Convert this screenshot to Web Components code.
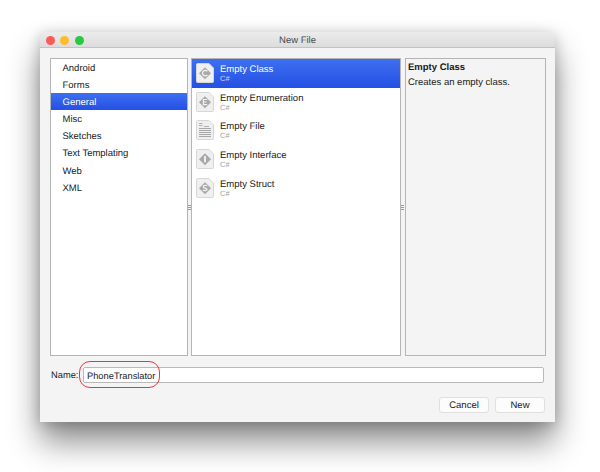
<!DOCTYPE html>
<html>
<head>
<meta charset="utf-8">
<title>New File</title>
<style>
html,body{margin:0;background:#fff;overflow:hidden}
body{width:600px;height:472px;font-family:"Liberation Sans",Arial,sans-serif;text-rendering:geometricPrecision}
</style>
</head>
<body>
<new-file-dialog></new-file-dialog>

<script>
/* small helper, every element below just sets its shadow html */
const shadow = (el, html) => { el.attachShadow({ mode: "open" }).innerHTML = html; };

const LETTERS = {
  class: '<path d="M11.300 8.400a2.700 2.700 0 1 0 0 3.400" fill="none" stroke="#f4f4f4" stroke-width="1.300"/>',
  enum: '<path d="M11.200 7.500H7.400v5.200h3.800M7.400 10h3.200" fill="none" stroke="#f4f4f4" stroke-width="1.200"/>',
  iface: '<path d="M9 7v6.200" fill="none" stroke="#f4f4f4" stroke-width="1.800"/>',
  struct: '<path d="M11 8c-.5-.8-3.700-1-3.800.7-.1 1.700 3.900 1 3.800 2.700-.1 1.600-3.400 1.400-4 .5" fill="none" stroke="#f4f4f4" stroke-width="1.200"/>'
};

class FileIcon extends HTMLElement {
  connectedCallback() {
    if (this._init) return; this._init = true;
    const kind = this.getAttribute("kind");
    let inner;
    if (LETTERS[kind]) {
      inner = `<path d="M9 4.200l6 6-6 6-6-6z" fill="#a8a8a8"/>${LETTERS[kind]}`;
    } else {
      inner = `<path d="M3 3.500h3.500M3 5.500h3.500M8 6.500h5" stroke="#b0b0b0" stroke-width="1"/>
        <path d="M3 8.500h12M3 10.500h12M3 12.500h12M3 14.500h12M3 16.500h12" stroke="#a8a8a8" stroke-width="1.100"/>`;
    }
    shadow(this, `<style>:host{display:block;width:18px;height:20px;flex:none}svg{display:block}</style>
      <svg width="18" height="20" viewBox="0 0 18 20">
        <path d="M.5 1.500a1 1 0 0 1 1-1H13l4.500 4.500v13.500a1 1 0 0 1-1 1h-15a1 1 0 0 1-1-1z" fill="#efefef" stroke="#d6d6d6"/>
        ${inner}
      </svg>`);
  }
}
customElements.define("file-icon", FileIcon);

class CategoryItem extends HTMLElement {
  connectedCallback() {
    if (this._init) return; this._init = true;
    shadow(this, `<style>
      :host{display:block;height:17.100px;line-height:19px;padding-left:11.500px;font-size:9.500px;color:#1a1a1a}
      :host([selected]){color:#fff;background:linear-gradient(180deg,#3e6ff0,#2450e4)}
    </style><slot></slot>`);
  }
}
customElements.define("category-item", CategoryItem);

class TemplateItem extends HTMLElement {
  connectedCallback() {
    if (this._init) return; this._init = true;
    const kind = this.getAttribute("kind");
    const sub = this.getAttribute("sub") || "C#";
    shadow(this, `<style>
      :host{display:flex;align-items:center;gap:6px;height:28.600px;padding-left:4px;color:#1a1a1a;font-size:9.500px}
      :host([selected]){color:#fff;background:linear-gradient(180deg,#3e6ff0,#2450e4)}
      .t{display:flex;flex-direction:column;line-height:11px;margin-top:1px}
      .s{font-size:7.500px;line-height:8px;color:#a3a3a3}
      :host([selected]) .s{color:#c7d4f8}
    </style>
    <file-icon kind="${kind}"></file-icon>
    <div class="t"><span><slot></slot></span><span class="s">${sub}</span></div>`);
  }
}
customElements.define("template-item", TemplateItem);

class PushButton extends HTMLElement {
  connectedCallback() {
    if (this._init) return; this._init = true;
    shadow(this, `<style>
      :host{display:block;box-sizing:border-box;width:50px;height:16px;line-height:16px;text-align:center;font-size:9.500px;color:#1a1a1a;
        background:#fcfcfc;border:1px solid #e0e0e0;border-radius:3px}
    </style><slot></slot>`);
  }
}
customElements.define("push-button", PushButton);

class PaneSplitter extends HTMLElement {
  connectedCallback() {
    if (this._init) return; this._init = true;
    shadow(this, `<style>
      :host{display:flex;flex-direction:column;justify-content:center;align-items:center;gap:1px;flex:none;width:3px;height:298px}
      i{display:block;width:3px;height:1px;background:#9a9a9a}
    </style><i></i><i></i><i></i>`);
  }
}
customElements.define("pane-splitter", PaneSplitter);

class NewFileDialog extends HTMLElement {
  connectedCallback() {
    if (this._init) return; this._init = true;
    shadow(this, `<style>
      :host{display:block;width:600px;height:472px;box-sizing:border-box;padding:32px 45px 50px 40px;color:#1a1a1a;overflow:hidden}
      .win{height:390px;background:#f4f4f4;border-radius:4px 4px 0 0;display:flex;flex-direction:column;
        box-shadow:0 20px 32px rgba(0,0,0,.45),0 2px 14px rgba(0,0,0,.2)}
      .bar{height:15px;position:relative;text-align:center;font-size:9.500px;line-height:18px;color:#4a4a4a;
        background:linear-gradient(180deg,#ececec,#dcdcdc);border-bottom:1px solid #c2c2c2;border-radius:4px 4px 0 0}
      .lights{position:absolute;left:5.500px;top:3.500px;display:flex;gap:5.600px}
      .lights i{width:9px;height:9px;border-radius:50%}
      .panes{display:flex;padding:10px 9px 0 10px;height:298px}
      .pane{box-sizing:border-box;height:298px;background:#fff;border:1px solid #b5b5b5}
      .cats{width:138px}
      .tmpl{width:210px}
      .info{width:141px;margin-left:1px;background:#f4f4f4;padding:1px 2px 0;font-size:9.500px;line-height:15px}
      .info b{display:block}
      .name{display:flex;align-items:center;margin:11px 11px 0 11px;font-size:9.300px;position:relative}
      .name label{width:32px;color:#1a1a1a}
      .field{flex:1;box-sizing:border-box;height:16px;line-height:16px;background:#fff;border:1px solid #b9b9b9;border-radius:2px;padding-left:3px}
      .ring{position:absolute;left:28px;top:-6px;width:81px;height:27px;box-sizing:border-box;border:1px solid #f4313a;border-radius:11px}
      .btns{display:flex;justify-content:flex-end;gap:6px;margin:14px 10px 0 0}
    </style>
    <div class="win">
      <div class="bar">
        <div class="lights"><i style="background:#fc5b57"></i><i style="background:#fdbc2e"></i><i style="background:#28c83f"></i></div>
        New File
      </div>
      <div class="panes">
        <div class="pane cats">
          <category-item>Android</category-item>
          <category-item>Forms</category-item>
          <category-item selected>General</category-item>
          <category-item>Misc</category-item>
          <category-item>Sketches</category-item>
          <category-item>Text Templating</category-item>
          <category-item>Web</category-item>
          <category-item>XML</category-item>
        </div>
        <pane-splitter></pane-splitter>
        <div class="pane tmpl">
          <template-item kind="class" selected>Empty Class</template-item>
          <template-item kind="enum">Empty Enumeration</template-item>
          <template-item kind="file">Empty File</template-item>
          <template-item kind="iface">Empty Interface</template-item>
          <template-item kind="struct">Empty Struct</template-item>
        </div>
        <pane-splitter></pane-splitter>
        <div class="pane info"><b>Empty Class</b>Creates an empty class.</div>
      </div>
      <div class="name"><label>Name:</label><div class="field">PhoneTranslator</div><div class="ring"></div></div>
      <div class="btns"><push-button>Cancel</push-button><push-button>New</push-button></div>
    </div>
    `);
  }
}
customElements.define("new-file-dialog", NewFileDialog);
</script>
</body>
</html>
